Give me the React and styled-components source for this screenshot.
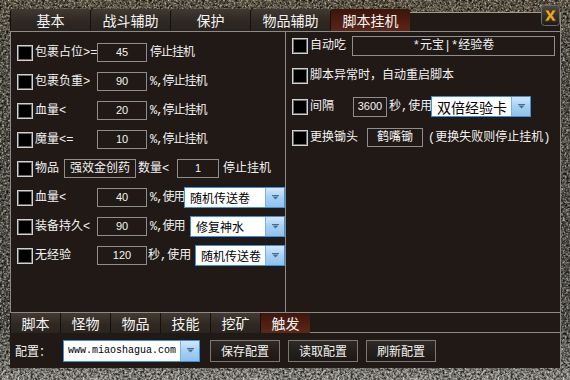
import React from "react";
import styled, { createGlobalStyle } from "styled-components";

const GlobalStyle = createGlobalStyle`
  html, body { margin: 0; padding: 0; background: #1a1a1a; }
  body { font-family: "Liberation Mono", "Noto Sans CJK SC", monospace; }
  * { box-sizing: border-box; }
`;

const noiseDark = `url("data:image/svg+xml;utf8,<svg xmlns='http://www.w3.org/2000/svg' width='160' height='160'><filter id='n'><feTurbulence type='fractalNoise' baseFrequency='0.45' numOctaves='3' stitchTiles='stitch'/><feColorMatrix values='0 0 0 0 0 0 0 0 0 0 0 0 0 0 0 1.8 0 0 0 -0.6'/></filter><rect width='160' height='160' filter='url(%23n)'/></svg>")`;
const noiseLight = `url("data:image/svg+xml;utf8,<svg xmlns='http://www.w3.org/2000/svg' width='160' height='160'><filter id='m'><feTurbulence type='fractalNoise' baseFrequency='0.6' numOctaves='2' seed='7' stitchTiles='stitch'/><feColorMatrix values='0 0 0 0 0.85 0 0 0 0 0.8 0 0 0 0 0.66 0 1.8 0 0 -0.75'/></filter><rect width='160' height='160' filter='url(%23m)'/></svg>")`;

const LINE = "#8c8a88";
const PANEL = "#201915";

const Window = styled.div`
  position: relative;
  width: 570px;
  height: 380px;
  padding: 9px 9px 12px 10px;
  display: flex;
  flex-direction: column;
  background-image: ${noiseDark}, ${noiseLight},
    linear-gradient(180deg, #6e6450 0%, #5e5a50 12%, #5a5852 85%, #8e8c86 96%, #a8a6a0 100%);
`;

const TopBar = styled.div`
  flex: none;
  display: flex;
  height: 22px;
`;

const TopTab = styled.div`
  flex: none;
  width: 80px;
  display: flex;
  align-items: center;
  justify-content: center;
  font-family: "Noto Sans CJK SC", sans-serif;
  font-size: 14px;
  color: #f4f4f4;
  border-radius: 3px 3px 0 0;
  border-left: 1px solid #14100d;
  background: ${(p) =>
    p.$active
      ? "linear-gradient(#3c140a, #4c1d10 50%, #5a2617)"
      : "linear-gradient(#423a31, #2e2823 55%, #29231f)"};
`;

const TopFill = styled.div`
  flex: 1;
  margin-top: 3px;
  background: ${PANEL};
  border-top: 1px solid #a29a86;
  border-right: 1px solid ${LINE};
`;

const Close = styled.div`
  position: absolute;
  left: 541px;
  top: 5px;
  width: 19px;
  height: 21px;
  display: flex;
`;

const Main = styled.div`
  flex: none;
  height: 282px;
  display: grid;
  grid-template-columns: 274px 275px;
  border: 1px solid ${LINE};
  background: ${PANEL};
`;

const LeftCol = styled.div`
  display: flex;
  flex-direction: column;
  padding: 6px 0 0 6px;
  overflow: hidden;
`;

const RightCol = styled.div`
  display: flex;
  flex-direction: column;
  padding: 0 5px 0 6px;
  border-left: 1px solid ${LINE};
`;

const Row = styled.div`
  flex: none;
  display: flex;
  align-items: center;
  height: ${(p) => p.$h || 29}px;
`;

const Check = styled.span`
  flex: none;
  width: 16px;
  height: 16px;
  margin-right: 2px;
  background: #000;
  border: 1px solid #d2d2d2;
  box-shadow: inset 0 0 0 1px #6a6a6a;
`;

const Label = styled.span`
  flex: none;
  width: ${(p) => (p.$w ? `${p.$w}px` : "auto")};
  margin-left: ${(p) => p.$ml || 0}px;
  font-size: 12px;
  line-height: 1;
  color: #f2f2f2;
  white-space: nowrap;
  letter-spacing: ${(p) => (p.$tight ? "-1px" : "0")};
`;

const Field = styled.div`
  flex: ${(p) => (p.$w ? "none" : "1")};
  width: ${(p) => (p.$w ? `${p.$w}px` : "auto")};
  height: ${(p) => p.$h || 19}px;
  margin-left: ${(p) => p.$ml || 0}px;
  border: 1px solid #8e8e8e;
  display: flex;
  align-items: center;
  justify-content: center;
  color: #f4f4f4;
  font-family: ${(p) =>
    p.$num ? '"Liberation Sans", sans-serif' : '"Liberation Mono", "Noto Sans CJK SC", monospace'};
  font-size: ${(p) => (p.$num ? 11 : 12)}px;
  line-height: 1;
  white-space: nowrap;
`;

const Select = styled.div`
  flex: ${(p) => (p.$w ? "none" : "1")};
  width: ${(p) => (p.$w ? `${p.$w}px` : "auto")};
  height: ${(p) => p.$h || 21}px;
  margin-left: ${(p) => p.$ml || 0}px;
  display: flex;
  background: #fff;
  border: 1px solid #3d8fe0;
`;

const SelectText = styled.span`
  flex: 1;
  display: flex;
  align-items: center;
  padding-left: ${(p) => p.$pl || 5}px;
  font-size: ${(p) => p.$fs || 12}px;
  font-family: ${(p) =>
    p.$mono ? '"Liberation Mono", monospace' : '"Noto Sans CJK SC", sans-serif'};
  color: #000;
  white-space: nowrap;
  overflow: hidden;
`;

const SelectBtn = styled.span`
  flex: none;
  width: 19px;
  display: flex;
  align-items: center;
  justify-content: center;
  background: linear-gradient(#d2e8fb, #a6d0f3 50%, #8fc2ee);
  border-left: 1px solid #7fb2e4;
`;

const BottomBar = styled.div`
  flex: none;
  display: flex;
  height: 20px;
`;

const BotTab = styled.div`
  flex: none;
  width: 50px;
  display: flex;
  align-items: center;
  justify-content: center;
  font-family: "Noto Sans CJK SC", sans-serif;
  font-size: 14px;
  color: #f4f4f4;
  border-left: 1px solid #14100d;
  background: ${(p) =>
    p.$active
      ? "linear-gradient(#3e150b, #4e1e11 50%, #5c2818)"
      : "linear-gradient(#433b32, #302923 55%, #2a241f)"};
`;

const BotFill = styled.div`
  flex: 1;
  background: ${PANEL};
  border-bottom: 1px solid ${LINE};
  border-right: 1px solid ${LINE};
`;

const ConfigRow = styled.div`
  flex: 1;
  display: flex;
  align-items: center;
  padding-left: 5px;
  background: ${PANEL};
  border-right: 1px solid ${LINE};
`;

const CfgLabel = styled.span`
  font-family: "Noto Sans CJK SC", sans-serif;
  font-size: 12px;
  color: #f2f2f2;
  width: 48px;
`;

const Btn = styled.div`
  flex: none;
  width: 70px;
  height: 22px;
  margin-left: ${(p) => p.$ml || 8}px;
  display: flex;
  align-items: center;
  justify-content: center;
  font-family: "Noto Sans CJK SC", sans-serif;
  font-size: 12px;
  color: #f2f2f2;
  border: 1px solid #7a7774;
  background: linear-gradient(#2f2925, #241e1a 60%, #1e1814);
`;

const Arrow = () => (
  <svg width="7" height="5" viewBox="0 0 7 5">
    <rect x="0" y="0" width="7" height="1" fill="#4a6d93" />
    <path d="M0.5 1.5 L6.5 1.5 L3.5 4.5 Z" fill="#4a6d93" />
  </svg>
);

const Dropdown = ({ text, fs, w, ml, h, mono, pl }) => (
  <Select $w={w} $ml={ml} $h={h}>
    <SelectText $fs={fs} $mono={mono} $pl={pl}>{text}</SelectText>
    <SelectBtn>
      <Arrow />
    </SelectBtn>
  </Select>
);

const CloseIcon = () => (
  <svg width="19" height="21" viewBox="0 0 19 21">
    <defs>
      <linearGradient id="cbg" x1="0" y1="0" x2="0" y2="1">
        <stop offset="0" stopColor="#4c4b48" />
        <stop offset="1" stopColor="#1b1a18" />
      </linearGradient>
    </defs>
    <rect x="0.5" y="0.5" width="18" height="20" rx="3" fill="url(#cbg)" stroke="#6e6c66" />
    <path
      d="M3.8 5 L7.6 5 L9.5 8.4 L11.4 5 L15.2 5 L11.6 10.6 L15.2 16 L11.4 16 L9.5 12.8 L7.6 16 L3.8 16 L7.4 10.6 Z"
      fill="#eaa823"
      stroke="#5b3a06"
      strokeWidth="0.8"
    />
  </svg>
);

const topTabs = ["基本", "战斗辅助", "保护", "物品辅助", "脚本挂机"];
const botTabs = ["脚本", "怪物", "物品", "技能", "挖矿", "触发"];

export default function App() {
  return (
    <>
      <GlobalStyle />
      <Window>
        <TopBar>
          {topTabs.map((t, i) => (
            <TopTab key={t} $active={i === 4}>
              {t}
            </TopTab>
          ))}
          <TopFill />
        </TopBar>
        <Close>
          <CloseIcon />
        </Close>

        <Main>
          <LeftCol>
            <Row>
              <Check />
              <Label $w={62}>包裹占位&gt;=</Label>
              <Field $w={50} $num>45</Field>
              <Label $ml={3} $tight>停止挂机</Label>
            </Row>
            <Row>
              <Check />
              <Label $w={62}>包裹负重&gt;</Label>
              <Field $w={50} $num>90</Field>
              <Label $ml={3} $tight>%,停止挂机</Label>
            </Row>
            <Row>
              <Check />
              <Label $w={62}>血量&lt;</Label>
              <Field $w={50} $num>20</Field>
              <Label $ml={3} $tight>%,停止挂机</Label>
            </Row>
            <Row>
              <Check />
              <Label $w={62}>魔量&lt;=</Label>
              <Field $w={50} $num>10</Field>
              <Label $ml={3} $tight>%,停止挂机</Label>
            </Row>
            <Row>
              <Check />
              <Label $w={29}>物品</Label>
              <Field $w={72}>强效金创药</Field>
              <Label $ml={2} $w={39}>数量&lt;</Label>
              <Field $w={42} $num>1</Field>
              <Label $ml={4}>停止挂机</Label>
            </Row>
            <Row>
              <Check />
              <Label $w={62}>血量&lt;</Label>
              <Field $w={50} $num>40</Field>
              <Label $ml={3} $w={34} $tight>%,使用</Label>
              <Dropdown text="随机传送卷" fs={12} />
            </Row>
            <Row>
              <Check />
              <Label $w={62}>装备持久&lt;</Label>
              <Field $w={50} $num>90</Field>
              <Label $ml={3} $w={34} $tight>%,使用</Label>
              <Dropdown text="修复神水" fs={12} ml={6} />
            </Row>
            <Row>
              <Check />
              <Label $w={62}>无经验</Label>
              <Field $w={50} $num>120</Field>
              <Label $ml={1} $w={42}>秒,使用</Label>
              <Dropdown text="随机传送卷" fs={12} ml={5} />
            </Row>
          </LeftCol>

          <RightCol>
            <Row $h={28}>
              <Check />
              <Label $w={42}>自动吃</Label>
              <Field $h={20}>*元宝|*经验卷</Field>
            </Row>
            <Row $h={31}>
              <Check />
              <Label>脚本异常时，自动重启脚本</Label>
            </Row>
            <Row $h={31}>
              <Check />
              <Label $w={43}>间隔</Label>
              <Field $w={34} $h={20} $num>3600</Field>
              <Label $ml={2} $w={42}>秒,使用</Label>
              <Dropdown text="双倍经验卡" fs={14} w={100} />
            </Row>
            <Row $h={31}>
              <Check />
              <Label $w={57}>更换锄头</Label>
              <Field $w={56}>鹤嘴锄</Field>
              <Label $ml={5}>(更换失败则停止挂机)</Label>
            </Row>
          </RightCol>
        </Main>

        <BottomBar>
          {botTabs.map((t, i) => (
            <BotTab key={t} $active={i === 5}>
              {t}
            </BotTab>
          ))}
          <BotFill />
        </BottomBar>

        <ConfigRow>
          <CfgLabel>配置：</CfgLabel>
          <Dropdown text="www.miaoshagua.com" mono fs={10} w={137} h={22} pl={4} />
          <Btn $ml={10}>保存配置</Btn>
          <Btn>读取配置</Btn>
          <Btn>刷新配置</Btn>
        </ConfigRow>
      </Window>
    </>
  );
}
